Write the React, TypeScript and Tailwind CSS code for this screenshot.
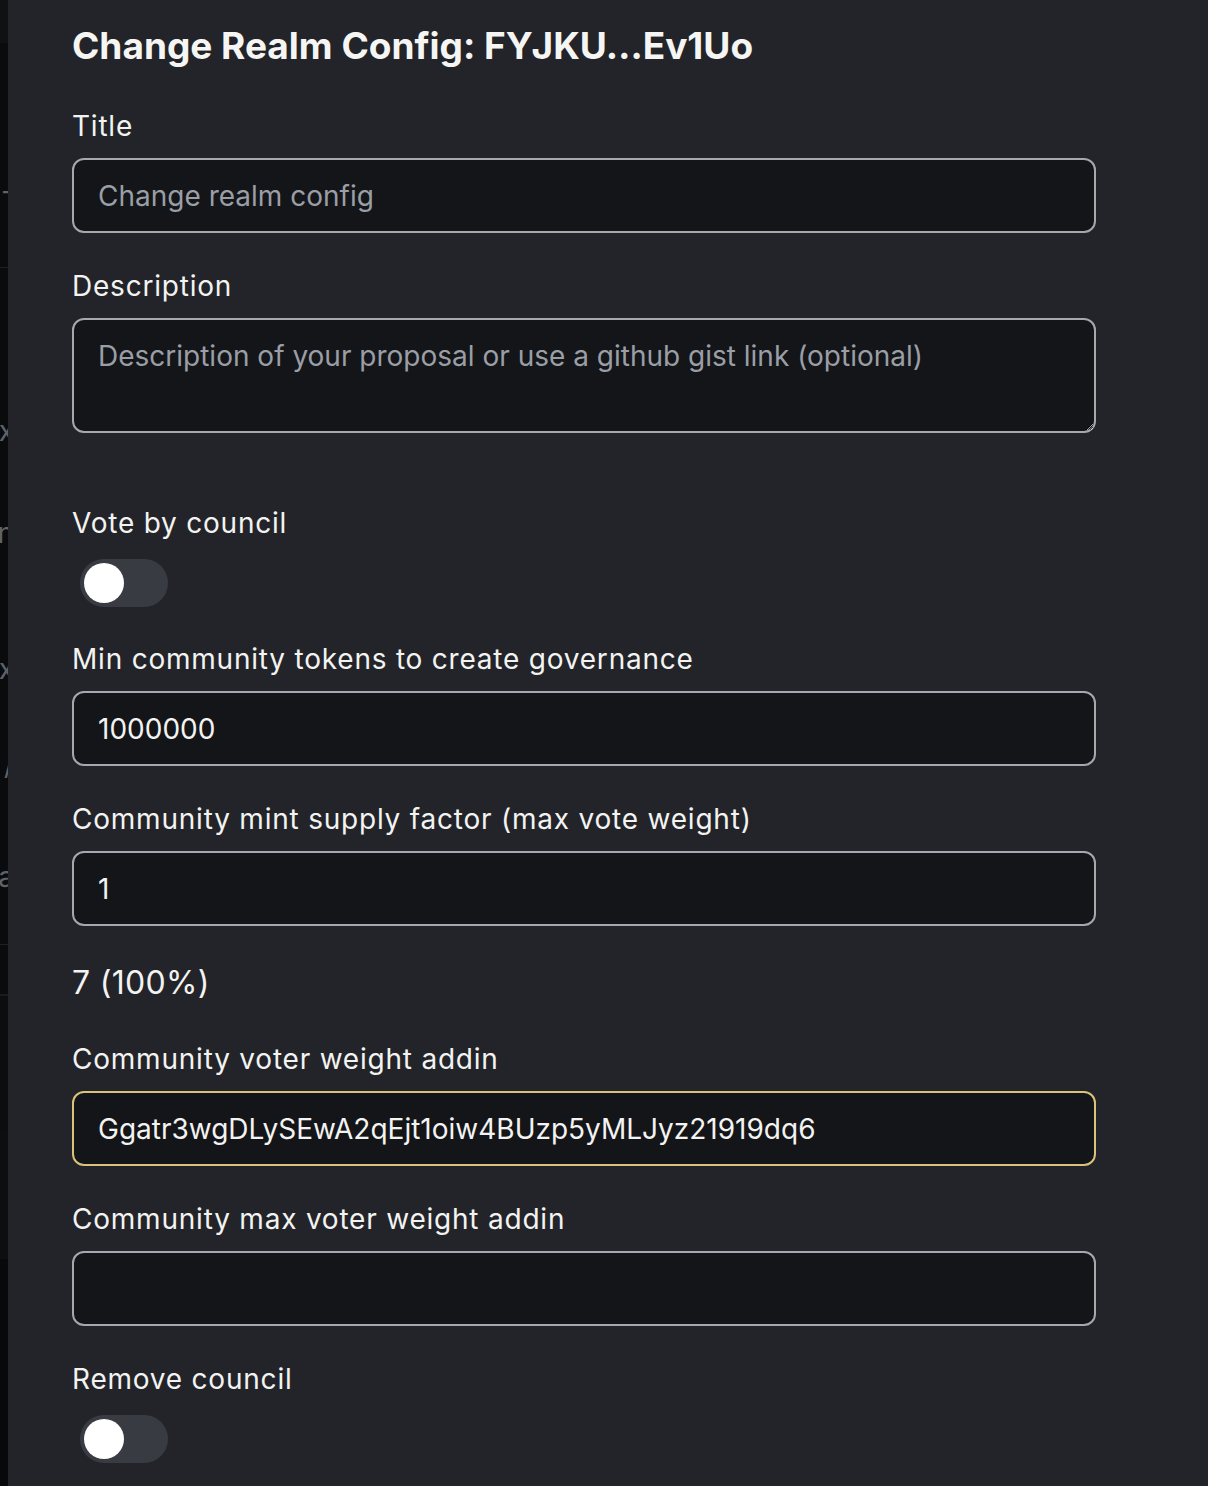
import React from 'react';

const font = { fontFamily: 'Inter, "Noto Sans", sans-serif' };

const Label: React.FC<{ children: React.ReactNode }> = ({ children }) => (
  <div className="h-[40px] text-[28px] leading-[40px] tracking-[0.028em] text-[#f3f3f1]">{children}</div>
);

const TextInput: React.FC<{ value?: string; placeholder?: string; focus?: boolean }> = ({ value, placeholder, focus }) => (
  <input
    readOnly
    value={value ?? ''}
    placeholder={placeholder}
    className={`mt-3 h-[75px] w-full rounded-[12px] border-2 bg-[#141518] px-[24px] text-[28px] text-[#f3f3f1] outline-none placeholder:text-[#9a9ea6] ${
      focus ? 'border-[#d9c27a]' : 'border-[#a4a8af]'
    }`}
    style={font}
  />
);

const Toggle = () => (
  <div className="mt-4 ml-[8px] flex h-[48px] w-[88px] items-center rounded-full bg-[#383b42] px-[4px]">
    <div className="h-[40px] w-[40px] rounded-full bg-white" />
  </div>
);

const SideGlyph: React.FC<{ h: number; ch?: string }> = ({ h, ch }) => (
  <div className="flex items-center justify-end overflow-hidden text-[28px] text-[#5f6267]" style={{ height: h }}>
    {ch && <span className="translate-x-[6px]">{ch}</span>}
  </div>
);

export default function App() {
  return (
    <div className="flex min-h-[1486px] w-full bg-[#222429]" style={font}>
      <div className="flex w-[8px] shrink-0 flex-col bg-[#0a0b0d]">
        <div className="h-[43px] bg-[#101113]" />
        <SideGlyph h={130} />
        <SideGlyph h={36} ch="-" />
        <SideGlyph h={58} />
        <div className="h-[1px] bg-[#1d1f22]" />
        <SideGlyph h={145} />
        <SideGlyph h={36} ch="x" />
        <SideGlyph h={66} />
        <SideGlyph h={36} ch="n" />
        <SideGlyph h={100} />
        <SideGlyph h={36} ch="x" />
        <SideGlyph h={60} />
        <SideGlyph h={36} ch="/" />
        <SideGlyph h={76} />
        <SideGlyph h={36} ch="a" />
        <SideGlyph h={49} />
        <div className="h-[1px] bg-[#1d1f22]" />
        <div className="h-[49px]" />
        <div className="h-[2px] bg-[#1a1b1e]" />
        <div className="h-[135px] bg-[#0c0d0f]" />
        <div className="h-[128px] bg-[#0d0e10]" />
        <div className="flex-1 bg-[#08090b]" />
      </div>

      <div className="flex-1 pl-[64px] pr-[112px]">
        <h1 className="mt-[22px] h-[48px] text-[37px] font-bold leading-[48px] text-[#f5f5f3]">
          Change Realm Config: FYJKU…Ev1Uo
        </h1>

        <div className="mt-[36px]">
          <Label>Title</Label>
          <TextInput placeholder="Change realm config" />
        </div>

        <div className="mt-[33px]">
          <Label>Description</Label>
          <textarea
            readOnly
            rows={2}
            placeholder="Description of your proposal or use a github gist link (optional)"
            className="mt-3 block h-[115px] w-full rounded-[12px] border-2 border-[#a4a8af] bg-[#141518] px-[24px] py-[18px] text-[28px] leading-[36px] text-[#f3f3f1] outline-none placeholder:text-[#9a9ea6]"
            style={font}
          />
        </div>

        <div className="mt-[70px]">
          <Label>Vote by council</Label>
          <Toggle />
        </div>

        <div className="mt-[32px]">
          <Label>Min community tokens to create governance</Label>
          <TextInput value="1000000" />
        </div>

        <div className="mt-[33px]">
          <Label>Community mint supply factor (max vote weight)</Label>
          <TextInput value="1" />
        </div>

        <div className="mt-[35px] h-[44px] text-[32px] leading-[44px] tracking-[0.01em] text-[#f3f3f1]">7 (100%)</div>

        <div className="mt-[34px]">
          <Label>Community voter weight addin</Label>
          <TextInput value="Ggatr3wgDLySEwA2qEjt1oiw4BUzp5yMLJyz21919dq6" focus />
        </div>

        <div className="mt-[33px]">
          <Label>Community max voter weight addin</Label>
          <TextInput />
        </div>

        <div className="mt-[33px]">
          <Label>Remove council</Label>
          <Toggle />
        </div>
      </div>
    </div>
  );
}
